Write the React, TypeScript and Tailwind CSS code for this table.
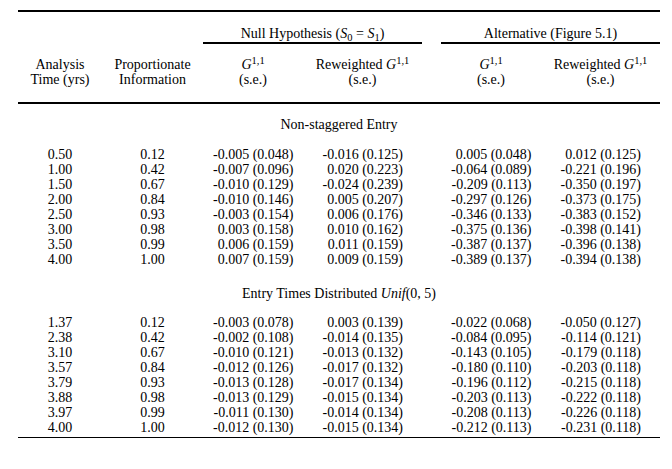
const COLS = 'grid grid-cols-[84px_101px_100px_119px_19px_100px_119px]'

type Row = [string, string, string, string, string, string]

const nonStaggered: Row[] = [
  ['0.50', '0.12', '-0.005 (0.048)', '-0.016 (0.125)', '0.005 (0.048)', '0.012 (0.125)'],
  ['1.00', '0.42', '-0.007 (0.096)', '0.020 (0.223)', '-0.064 (0.089)', '-0.221 (0.196)'],
  ['1.50', '0.67', '-0.010 (0.129)', '-0.024 (0.239)', '-0.209 (0.113)', '-0.350 (0.197)'],
  ['2.00', '0.84', '-0.010 (0.146)', '0.005 (0.207)', '-0.297 (0.126)', '-0.373 (0.175)'],
  ['2.50', '0.93', '-0.003 (0.154)', '0.006 (0.176)', '-0.346 (0.133)', '-0.383 (0.152)'],
  ['3.00', '0.98', '0.003 (0.158)', '0.010 (0.162)', '-0.375 (0.136)', '-0.398 (0.141)'],
  ['3.50', '0.99', '0.006 (0.159)', '0.011 (0.159)', '-0.387 (0.137)', '-0.396 (0.138)'],
  ['4.00', '1.00', '0.007 (0.159)', '0.009 (0.159)', '-0.389 (0.137)', '-0.394 (0.138)'],
]

const uniform: Row[] = [
  ['1.37', '0.12', '-0.003 (0.078)', '0.003 (0.139)', '-0.022 (0.068)', '-0.050 (0.127)'],
  ['2.38', '0.42', '-0.002 (0.108)', '-0.014 (0.135)', '-0.084 (0.095)', '-0.114 (0.121)'],
  ['3.10', '0.67', '-0.010 (0.121)', '-0.013 (0.132)', '-0.143 (0.105)', '-0.179 (0.118)'],
  ['3.57', '0.84', '-0.012 (0.126)', '-0.017 (0.132)', '-0.180 (0.110)', '-0.203 (0.118)'],
  ['3.79', '0.93', '-0.013 (0.128)', '-0.017 (0.134)', '-0.196 (0.112)', '-0.215 (0.118)'],
  ['3.88', '0.98', '-0.013 (0.129)', '-0.015 (0.134)', '-0.203 (0.113)', '-0.222 (0.118)'],
  ['3.97', '0.99', '-0.011 (0.130)', '-0.014 (0.134)', '-0.208 (0.113)', '-0.226 (0.118)'],
  ['4.00', '1.00', '-0.012 (0.130)', '-0.015 (0.134)', '-0.212 (0.113)', '-0.231 (0.118)'],
]

// estimate cells are right-aligned in a fixed box so the decimals line up
function Est({ v }: { v: string }) {
  return <div className="w-[81px] justify-self-center text-right whitespace-pre">{v}</div>
}

function DataRows({ rows }: { rows: Row[] }) {
  return (
    <div className={COLS}>
      {rows.map((r, i) => (
        <div key={i} className="contents">
          <div className="text-center">{r[0]}</div>
          <div className="text-center">{r[1]}</div>
          <Est v={r[2]} />
          <Est v={r[3]} />
          <div />
          <Est v={r[4]} />
          <Est v={r[5]} />
        </div>
      ))}
    </div>
  )
}

function G() {
  return (
    <span>
      <i>G</i>
      <sup>1,1</sup>
    </span>
  )
}

export default function App() {
  return (
    <div className="h-[469px] w-[672px] bg-white pl-[18px] pt-[10px] font-['Liberation_Serif',serif] text-[14px] leading-[15px] text-black">
      <div className="w-[642px]">
        <div className="h-[2px] bg-black" />

        <div className={`${COLS} pt-[14px]`}>
          <div className="col-span-2 col-start-3 border-b-2 border-black pb-[1px] text-center">
            Null Hypothesis (<i>S</i>
            <sub>0</sub> = <i>S</i>
            <sub>1</sub>)
          </div>
          <div className="col-span-2 col-start-6 border-b-2 border-black pb-[1px] text-center">Alternative (Figure 5.1)</div>
        </div>

        <div className={`${COLS} pb-[15px] pt-[13px] text-center`}>
          <div>
            Analysis
            <br />
            Time (yrs)
          </div>
          <div>
            Proportionate
            <br />
            Information
          </div>
          <div>
            <G />
            <br />
            (s.e.)
          </div>
          <div>
            Reweighted <G />
            <br />
            (s.e.)
          </div>
          <div />
          <div>
            <G />
            <br />
            (s.e.)
          </div>
          <div>
            Reweighted <G />
            <br />
            (s.e.)
          </div>
        </div>
        <div className="h-[2px] bg-black" />

        <div className="pb-[15px] pt-[13px] text-center">Non-staggered Entry</div>
        <DataRows rows={nonStaggered} />

        <div className="pb-[14px] pt-[19px] text-center">
          Entry Times Distributed <i>Unif</i>(0, 5)
        </div>
        <DataRows rows={uniform} />
        <div className="mt-[2px] h-[1px] bg-black" />
      </div>
    </div>
  )
}
